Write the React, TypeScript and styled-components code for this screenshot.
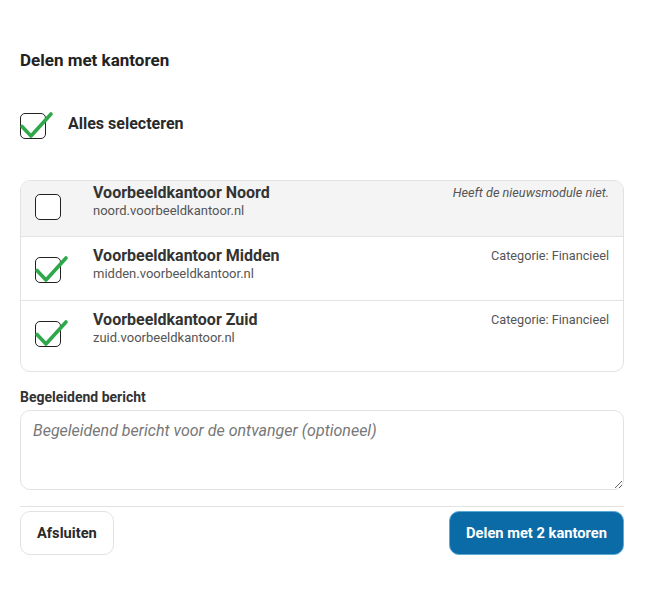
import React from "react";
import styled, { createGlobalStyle } from "styled-components";

const GlobalStyle = createGlobalStyle`
  body {
    margin: 0;
    background: #ffffff;
    font-family: Roboto, "Liberation Sans", Arial, sans-serif;
    color: #222;
  }
`;

interface Office {
  name: string;
  url: string;
  note: string;
  disabled?: boolean;
  checked: boolean;
}

const offices: Office[] = [
  {
    name: "Voorbeeldkantoor Noord",
    url: "noord.voorbeeldkantoor.nl",
    note: "Heeft de nieuwsmodule niet.",
    disabled: true,
    checked: false,
  },
  {
    name: "Voorbeeldkantoor Midden",
    url: "midden.voorbeeldkantoor.nl",
    note: "Categorie: Financieel",
    checked: true,
  },
  {
    name: "Voorbeeldkantoor Zuid",
    url: "zuid.voorbeeldkantoor.nl",
    note: "Categorie: Financieel",
    checked: true,
  },
];

const Page = styled.div`
  width: 604px;
  padding: 50px 0 40px 20px;
  display: flex;
  flex-direction: column;
`;

const Title = styled.h2`
  margin: 0;
  font-size: 17px;
  line-height: 20px;
  font-weight: 700;
  color: #222;
`;

const SelectAllRow = styled.label`
  display: flex;
  align-items: center;
  gap: 22px;
  margin-top: 43px;
  font-size: 16px;
  font-weight: 700;
  color: #2a2a2a;
`;

const SelectAllText = styled.span`
  margin-top: -6px;
`;

const Box = styled.span<{ $top?: number }>`
  position: relative;
  flex: none;
  width: 26px;
  height: 26px;
  box-sizing: border-box;
  border: 1.5px solid #222;
  border-radius: 5px;
  background: #fff;
  margin-top: ${(p) => p.$top ?? 0}px;
`;

const Tick = styled.svg`
  position: absolute;
  left: -1px;
  top: -3px;
  overflow: visible;
`;

const List = styled.div`
  margin-top: 41px;
  border: 1px solid #e2e2e2;
  border-radius: 10px;
  overflow: hidden;
  padding-bottom: 7px;
`;

const Row = styled.div<{ $muted?: boolean; $clipped?: boolean }>`
  display: flex;
  align-items: flex-start;
  gap: 32px;
  padding: ${(p) => (p.$clipped ? 2 : 9)}px 14px 0 14px;
  height: ${(p) => (p.$clipped ? 55 : 64)}px;
  box-sizing: border-box;
  background: ${(p) => (p.$muted ? "#f4f4f4" : "#fff")};
  & + & {
    border-top: 1px solid #e2e2e2;
  }
`;

const OfficeInfo = styled.div`
  flex: 1;
  display: flex;
  flex-direction: column;
`;

const OfficeName = styled.span`
  font-size: 16px;
  line-height: 20px;
  font-weight: 700;
  color: #333;
`;

const OfficeUrl = styled.span`
  font-size: 13px;
  line-height: 16px;
  color: #555;
`;

const Note = styled.span<{ $italic?: boolean }>`
  font-size: 12.7px;
  line-height: 20px;
  color: #555;
  font-style: ${(p) => (p.$italic ? "italic" : "normal")};
`;

const FieldLabel = styled.label`
  margin-top: 17px;
  font-size: 14px;
  line-height: 16px;
  font-weight: 700;
  color: #333;
`;

const MessageInput = styled.textarea`
  display: block;
  margin-top: 5px;
  width: 100%;
  height: 80px;
  box-sizing: border-box;
  border: 1px solid #e2e2e2;
  border-radius: 10px;
  padding: 10px 12px;
  font-family: Roboto, "Liberation Sans", Arial, sans-serif;
  font-size: 16px;
  line-height: 20px;
  color: #333;
  outline: none;
  &::placeholder {
    color: #777;
    font-style: italic;
  }
`;

const Footer = styled.div`
  margin-top: 16px;
  border-top: 1px solid #e2e2e2;
  padding-top: 4px;
  display: flex;
  justify-content: space-between;
`;

const Button = styled.button<{ $primary?: boolean }>`
  height: 44px;
  padding: 0 16px;
  border-radius: 10px;
  font-family: Roboto, "Liberation Sans", Arial, sans-serif;
  font-size: 14.7px;
  font-weight: 700;
  cursor: pointer;
  border: 1px solid ${(p) => (p.$primary ? "#5aa9d8" : "#e2e2e2")};
  background: ${(p) => (p.$primary ? "#0a6ba6" : "#fff")};
  color: ${(p) => (p.$primary ? "#fff" : "#2a2a2a")};
`;

const Checkbox: React.FC<{ checked: boolean; top?: number }> = ({ checked, top }) => (
  <Box $top={top}>
    {checked && (
      <Tick width="34" height="30" viewBox="0 0 34 30">
        <path
          d="M2 15.5 L11 25 L31 3"
          fill="none"
          stroke="#2ea84a"
          strokeWidth="3.6"
          strokeLinecap="round"
          strokeLinejoin="round"
        />
      </Tick>
    )}
  </Box>
);

export default function App() {
  const count = offices.filter((o) => o.checked).length;
  return (
    <>
      <GlobalStyle />
      <Page>
        <Title>Delen met kantoren</Title>
        <SelectAllRow>
          <Checkbox checked />
          <SelectAllText>Alles selecteren</SelectAllText>
        </SelectAllRow>
        <List>
          {offices.map((o, i) => (
            <Row key={o.url} $muted={o.disabled} $clipped={i === 0}>
              <Checkbox checked={o.checked} top={11} />
              <OfficeInfo>
                <OfficeName>{o.name}</OfficeName>
                <OfficeUrl>{o.url}</OfficeUrl>
              </OfficeInfo>
              <Note $italic={o.disabled}>{o.note}</Note>
            </Row>
          ))}
        </List>
        <FieldLabel>Begeleidend bericht</FieldLabel>
        <MessageInput placeholder="Begeleidend bericht voor de ontvanger (optioneel)" />
        <Footer>
          <Button>Afsluiten</Button>
          <Button $primary>Delen met {count} kantoren</Button>
        </Footer>
      </Page>
    </>
  );
}
